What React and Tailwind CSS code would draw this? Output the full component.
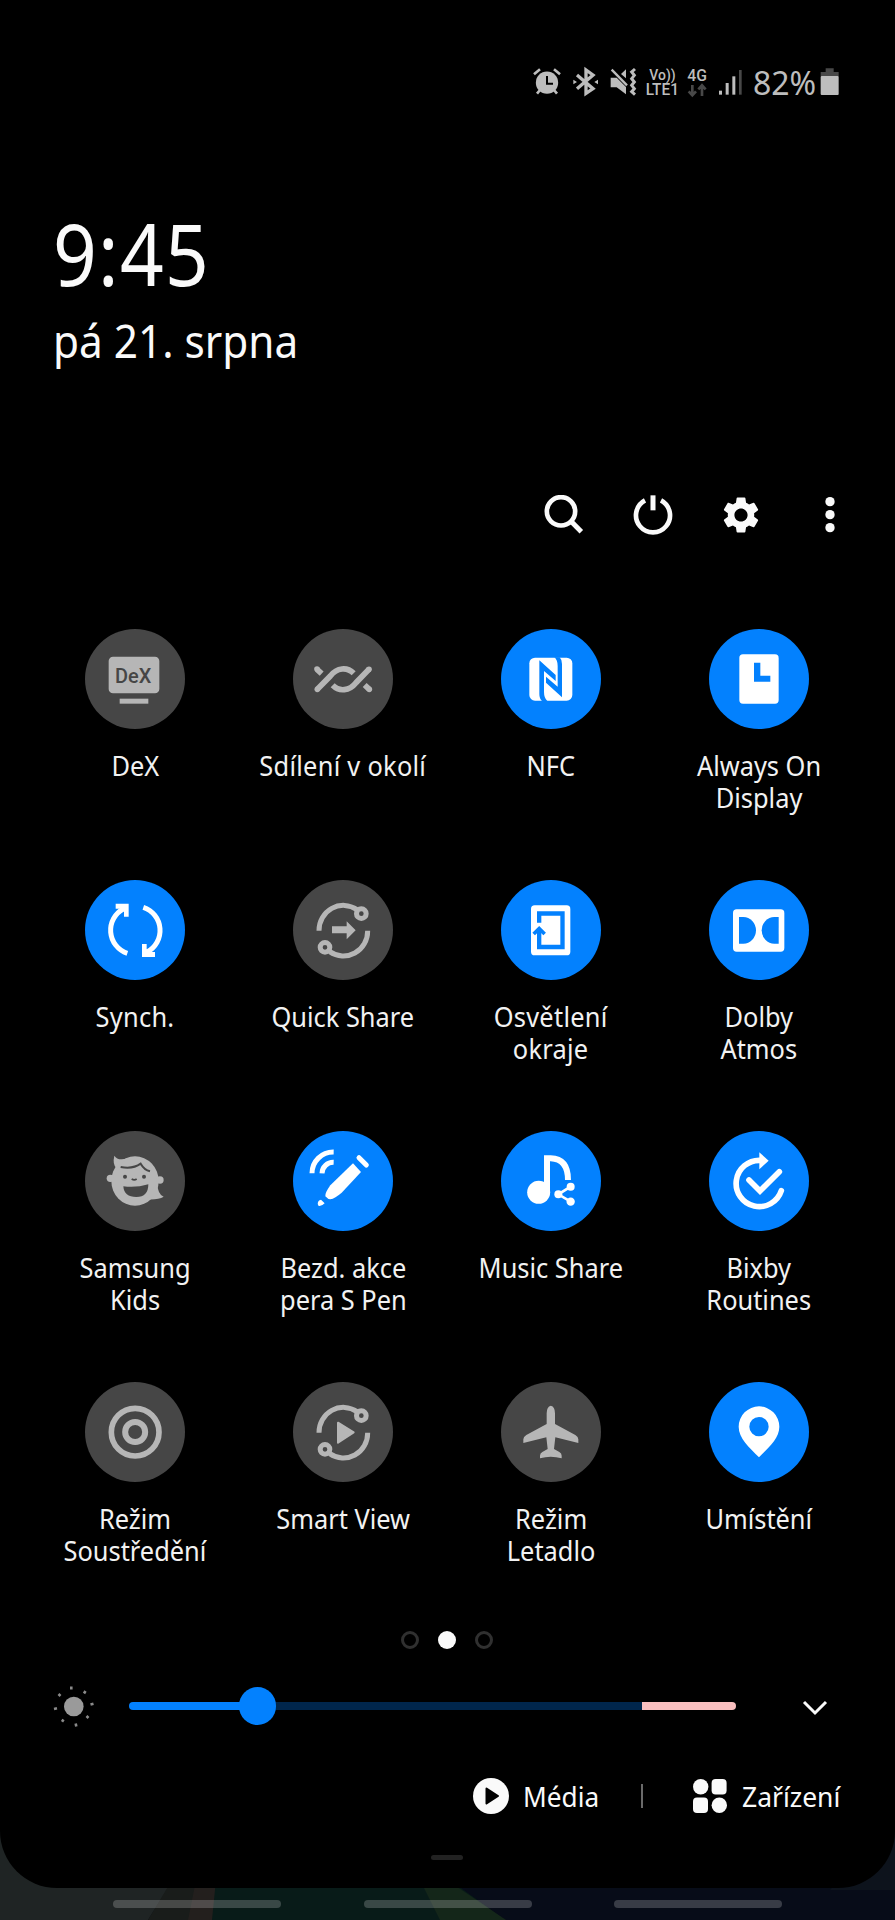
import clsx from "clsx";
import { MdSettings } from "react-icons/md";

const OFF = "#464646";
const ON = "#0381fe";

function DexIcon() {
  return (
    <svg viewBox="76 25 300 300" className="size-full" fill="currentColor">
      <rect x="147" y="108" width="152" height="110" rx="13" />
      <rect x="180" y="234" width="86" height="15" />
      <text
        x="166"
        y="186"
        fill={OFF}
        textLength="109"
        lengthAdjust="spacingAndGlyphs"
        className="font-['Roboto',sans-serif] text-[58px] font-medium"
      >
        DeX
      </text>
    </svg>
  );
}

function NearbyIcon() {
  return (
    <svg
      viewBox="700 25 300 300"
      className="size-full"
      fill="none"
      stroke="currentColor"
      strokeWidth="17"
    >
      <path d="M773 206 812 166C832 141 862 138 882 158M928 146 889 186C869 211 839 214 819 194" />
      <path d="M772 146 786 159M915 193 929 206" />
      <g fill="currentColor" stroke="none">
        <circle cx="772" cy="145" r="8.5" />
        <circle cx="773" cy="206" r="8.5" />
        <circle cx="928" cy="146" r="8.5" />
        <circle cx="929" cy="206" r="8.5" />
      </g>
    </svg>
  );
}

function NfcIcon() {
  return (
    <svg viewBox="65 25 300 300" className="size-full" fill="currentColor">
      <rect x="150" y="111" width="129" height="129" rx="17" />
      <g fill={ON}>
        <path d="M180 119 229 163V181L194 151V214Q194 232 204 241H188Q180 234 180 220Z" />
        <path d="M248 230 200 186V168L235 198V136Q235 118 225 110H241Q248 117 248 130Z" />
      </g>
    </svg>
  );
}

function AlwaysOnIcon() {
  return (
    <svg viewBox="689 25 300 300" className="size-full" fill="currentColor">
      <rect x="780" y="101" width="118" height="148" rx="11" />
      <path d="M824 126h19v39h30v18h-49z" fill={ON} />
    </svg>
  );
}

function SyncIcon() {
  return (
    <svg viewBox="76 28 300 300" className="size-full" fill="currentColor">
      <g fill="none" stroke="currentColor" strokeWidth="15">
        <path d="M203 248A73 73 0 0 1 192 114" />
        <path d="M251 110A73 73 0 0 1 262 244" />
      </g>
      <path d="M168 99H207V138H193V122L180 114H168Z" />
      <path d="M286 259H247V220H261V236L274 244H286Z" />
    </svg>
  );
}

// Broken ring with two nodes, shared by Quick Share and Smart View
function OrbitIcon({ children }) {
  return (
    <svg viewBox="700 28 300 300" className="size-full" fill="currentColor">
      <g fill="none" stroke="currentColor" strokeWidth="15">
        <path d="M778 180A73 75 0 0 1 892 117" />
        <path d="M924 180A73 75 0 0 1 810 243" />
        <circle cx="905" cy="129" r="14.5" />
        <circle cx="796" cy="230" r="14.5" />
      </g>
      {children}
    </svg>
  );
}

function QuickShareIcon() {
  return (
    <OrbitIcon>
      <path d="M817 167H861V152L888 179 861 206V188H817Z" />
    </OrbitIcon>
  );
}

function SmartViewIcon() {
  return (
    <OrbitIcon>
      <path
        d="M835 150 882 179 835 210Z"
        stroke="currentColor"
        strokeWidth="6"
        strokeLinejoin="round"
      />
    </OrbitIcon>
  );
}

function EdgeLightingIcon() {
  return (
    <svg viewBox="65 28 300 300" className="size-full" fill="currentColor">
      <rect x="155" y="104" width="118" height="150" rx="11" />
      <g fill="none" stroke={ON} strokeWidth="13">
        <path d="M179.500 156V128.500H249.500V229H179.500V178" />
        <path d="M163 190 179.500 174 196 190" strokeWidth="11" />
      </g>
    </svg>
  );
}

function DolbyIcon() {
  return (
    <svg viewBox="689 28 300 300" className="size-full" fill="currentColor">
      <rect x="761" y="116" width="154" height="127" rx="11" />
      <g fill={ON}>
        <path d="M779 139H792A38 40 0 0 1 792 219H779Z" />
        <path d="M898 139H885A38 40 0 0 0 885 219H898Z" />
      </g>
    </svg>
  );
}

function KidsIcon() {
  return (
    <svg viewBox="76 33 300 300" className="size-full" fill="currentColor">
      <ellipse cx="226" cy="183" rx="71" ry="74" />
      <circle cx="152" cy="175" r="11" />
      <circle cx="301" cy="180" r="11" />
      <path d="M164 107Q158 132 170 144L204 115Q174 124 164 107Z" />
      <path d="M292 186Q294 224 312 230Q296 240 262 238Z" />
      <path d="M183 141Q220 148 243 131Q254 150 271 154" fill="none" stroke={OFF} strokeWidth="6" />
      <path d="M216 177Q224 182 231 177" fill="none" stroke={OFF} strokeWidth="5" />
      <g fill={OFF}>
        <circle cx="196" cy="170" r="6" />
        <circle cx="253" cy="170" r="6" />
        <path d="M191 199Q229 204 266 193Q266 231 230 231Q193 231 191 199Z" />
      </g>
    </svg>
  );
}

function SPenIcon() {
  return (
    <svg viewBox="700 33 300 300" className="size-full" fill="currentColor">
      <g fill="none" stroke="currentColor" strokeWidth="15">
        <path d="M757 160A64 64 0 0 1 822 96" />
        <path d="M787 160A34 34 0 0 1 822 127" />
        <path d="M898 113 920 135" strokeLinecap="round" />
      </g>
      <path d="M880 130 904 156 846 218Q826 235 812 238Q805 238 797 229Q795 220 812 196Z" />
      <path d="M784 239 795 250Q785 260 777 258Q772 254 775 246Q777 240 784 239Z" />
    </svg>
  );
}

function MusicShareIcon() {
  return (
    <svg viewBox="65 33 300 300" className="size-full" fill="currentColor">
      <circle cx="178" cy="217" r="34.500" />
      <path
        d="M203 217V115H214C248 116 266 138 266 180"
        fill="none"
        stroke="currentColor"
        strokeWidth="18"
      />
      <path d="M274 200 237 223 274 245" fill="none" stroke="currentColor" strokeWidth="8" />
      <circle cx="237" cy="223" r="12" />
      <circle cx="274" cy="200" r="12" />
      <circle cx="274" cy="245" r="12.500" />
    </svg>
  );
}

function RoutinesIcon() {
  return (
    <svg viewBox="689 33 300 300" className="size-full" fill="currentColor">
      <g fill="none" stroke="currentColor" strokeWidth="17" strokeLinecap="round">
        <path d="M843 121A69.500 69.500 0 1 0 906 212" />
        <path d="M809 180 842 213 900 155" />
      </g>
      <path d="M840 97 868 122 840 148Z" />
    </svg>
  );
}

function FocusIcon() {
  return (
    <svg
      viewBox="76 36 300 300"
      className="size-full"
      fill="none"
      stroke="currentColor"
    >
      <circle cx="226.500" cy="186.500" r="71.500" strokeWidth="17" />
      <circle cx="226.500" cy="186" r="30" strokeWidth="18" />
    </svg>
  );
}

function AirplaneIcon() {
  return (
    <svg viewBox="65 36 300 300" className="size-full" fill="currentColor">
      <path d="M214.500 107Q227 110 227 130V162L288 195Q297 200 297 208V219L228 202L224 237L240 246Q247 250 247 257V265Q214 256 182 265V257Q182 250 189 246L205 237L201 202L132 219V208Q132 200 141 195L202 162V130Q202 110 214.500 107Z" />
    </svg>
  );
}

function LocationIcon() {
  return (
    <svg viewBox="689 36 300 300" className="size-full" fill="currentColor">
      <path
        fillRule="evenodd"
        d="M839 262C810 232 778 205 778 170A61 61 0 0 1 900 170C900 205 868 232 839 262ZM839 141A29 29 0 1 0 839 199A29 29 0 1 0 839 141Z"
      />
    </svg>
  );
}

const tiles = [
  { label: "DeX", icon: DexIcon },
  { label: "Sdílení v okolí", icon: NearbyIcon, wide: true },
  { label: "NFC", icon: NfcIcon, on: true },
  { label: "Always On\nDisplay", icon: AlwaysOnIcon, on: true },
  { label: "Synch.", icon: SyncIcon, on: true, wide: true },
  { label: "Quick Share", icon: QuickShareIcon },
  { label: "Osvětlení\nokraje", icon: EdgeLightingIcon, on: true, wide: true },
  { label: "Dolby\nAtmos", icon: DolbyIcon, on: true },
  { label: "Samsung\nKids", icon: KidsIcon },
  { label: "Bezd. akce\npera S Pen", icon: SPenIcon, on: true },
  { label: "Music Share", icon: MusicShareIcon, on: true },
  { label: "Bixby\nRoutines", icon: RoutinesIcon, on: true },
  { label: "Režim\nSoustředění", icon: FocusIcon },
  { label: "Smart View", icon: SmartViewIcon },
  { label: "Režim\nLetadlo", icon: AirplaneIcon },
  { label: "Umístění", icon: LocationIcon, on: true }
];

function Tile({ tile }) {
  const Icon = tile.icon;
  return (
    <div className="flex flex-col items-center">
      <div
        className={clsx(
          "size-[100px] rounded-full",
          tile.on ? "bg-[#0381fe] text-white" : "bg-[#464646] text-[#b6b6b6]"
        )}
      >
        <Icon />
      </div>
      <p
        className={clsx(
          "mt-[21px] scale-x-94 text-center text-[27px] leading-[32.4px] whitespace-pre text-[#f2f2f2]",
          tile.wide && "tracking-[0.3px]"
        )}
      >
        {tile.label}
      </p>
    </div>
  );
}

function StatusBar() {
  return (
    <div className="flex h-[96px] items-end justify-end pr-[55px] text-[#bdbdbd]">
      {/* alarm, bluetooth, vibrate, VoLTE, data, signal */}
      <svg
        viewBox="36 36 636 90"
        className="mb-[-1px] h-[30px] w-[212px] overflow-visible"
        fill="currentColor"
      >
        <circle cx="81" cy="83" r="33.500" />
        <g fill="none" stroke="currentColor" strokeWidth="8">
          <path d="M42 58 60 43M102 43 120 58" />
          <path d="M60 105 51 116M102 105 111 116" />
          <path d="M81 63V86H99" stroke="#000" strokeWidth="6" />
        </g>
        <g fill="none" stroke="currentColor" strokeWidth="10">
          <path d="M171 60 219 101 198 115V45L219 60 171 101" />
        </g>
        <path d="M160 74 171 81 160 88ZM234 74 223 81 234 88Z" />
        <path d="M272 68H290L318 96V118L290 97H272ZM303 57 318 43V70Z" />
        <path d="M275 44 321 91" fill="none" stroke="currentColor" strokeWidth="7" />
        <path
          d="M345 42 335 51 343 61 335 71 343 81 335 91 343 101 335 110 345 119"
          fill="none"
          stroke="currentColor"
          strokeWidth="9"
        />
        <g className="font-['Roboto',sans-serif] font-medium">
          <text x="388" y="75" fontSize="46" textLength="79" lengthAdjust="spacingAndGlyphs">Vo))</text>
          <text x="377" y="120" fontSize="47" textLength="100" lengthAdjust="spacingAndGlyphs">LTE1</text>
          <text x="502" y="79" fontSize="51" textLength="59" lengthAdjust="spacingAndGlyphs">4G</text>
        </g>
        <g fill="none" stroke="#484848" strokeWidth="8">
          <path d="M517 90V120M506 109 517 121 528 109" />
          <path d="M546 123V92M535 103 546 91 557 103" />
        </g>
        <rect x="597" y="107" width="9" height="12" />
        <rect x="617" y="84" width="9" height="35" />
        <rect x="637" y="64" width="9" height="55" />
        <rect x="657" y="45" width="8" height="74" fill="#484848" />
      </svg>
      <span className="ml-[9px] w-[67px] text-[32px] leading-[27px] tracking-[-0.1px] whitespace-nowrap">
        82%
      </span>
      <svg viewBox="901 39 60 84" className="h-[28px] w-[20px]" fill="#484848">
        <path d="M918 40H942V51H957V64H903V51H918Z" />
        <rect x="903" y="63" width="54" height="57" rx="3" fill="#bdbdbd" />
      </svg>
    </div>
  );
}

function Toolbar() {
  return (
    <div className="mt-[125px] flex h-10 items-center justify-end gap-[48.7px] pr-[45px]">
      <svg viewBox="72 44 120 120" className="size-10" fill="none" stroke="currentColor">
        <circle cx="123" cy="93" r="42.500" strokeWidth="14" />
        <path d="M153 123 184 154" strokeWidth="15" />
      </svg>
      <svg viewBox="338 44 120 120" className="size-10" fill="none" stroke="currentColor">
        <path d="M374 60A51 51 0 1 0 422 60" strokeWidth="14" />
        <path d="M398 45V90" strokeWidth="15" />
      </svg>
      <MdSettings className="-mx-0.5 size-11" />
      <svg viewBox="870 44 120 120" className="size-10" fill="currentColor">
        <circle cx="930" cy="64" r="14" />
        <circle cx="930" cy="103" r="14" />
        <circle cx="930" cy="142" r="14" />
      </svg>
    </div>
  );
}

function Brightness() {
  return (
    <div className="mt-[37px] flex h-10 items-center pl-[54px]">
      <svg viewBox="54 1687 40 40" className="size-10 overflow-visible" fill="#9a9a9a">
        <circle cx="73.800" cy="1707.500" r="9.800" />
        <g fill="none" stroke="#8a8a8a" strokeWidth="2.600">
          <path d="M71.300 1687.500V1690.500M84 1694.500 85.500 1692M90.500 1705.500 93.500 1704.700M86.500 1717 88.500 1719M75.700 1724.500 76.300 1727.500M62 1722.800 63.500 1720.500M54 1710 57 1709.300M58.500 1695 60.500 1697" />
        </g>
      </svg>
      <div className="relative ml-[34.5px] flex h-2 w-[607.5px] overflow-visible">
        <div className="w-[129px] rounded-l-full bg-[#0381fe]" />
        <div className="flex-1 bg-[#00264c]" />
        <div className="w-[94px] rounded-r-full bg-[#f9bfbf]" />
        <div className="absolute top-[-15px] left-[110px] size-[37.5px] rounded-full bg-[#0381fe]" />
      </div>
      <svg viewBox="0 0 28 18" className="mt-0.5 ml-[64.5px] h-[18px] w-7" fill="none" stroke="currentColor" strokeWidth="3">
        <path d="M3 4 14 15 25 4" />
      </svg>
    </div>
  );
}

function MediaDevices() {
  return (
    <div className="mt-[52px] flex h-9 items-center pl-[473px] text-[27px] leading-9 whitespace-nowrap">
      <svg viewBox="0 0 36 36" className="size-9">
        <circle cx="18" cy="18" r="18" fill="currentColor" />
        <path d="M13.500 10.500 25 18 13.500 25.500Z" fill="#000" stroke="#000" strokeWidth="2" strokeLinejoin="round" />
      </svg>
      <span className="mt-px ml-[14px] w-[118px] origin-left scale-x-97">Média</span>
      <div className="h-6 w-0.5 bg-[#6a6a6a]" />
      <svg viewBox="0 0 34 34" className="ml-[50px] size-[34px]" fill="currentColor">
        <circle cx="7.700" cy="7.700" r="7.700" />
        <rect x="18.600" width="15" height="15.400" rx="4" />
        <rect y="18.600" width="15" height="15.400" rx="4" />
        <circle cx="26.300" cy="26.300" r="7.700" />
      </svg>
      <span className="mt-px ml-[15px] origin-left scale-x-98">Zařízení</span>
    </div>
  );
}

// Dimmed home screen that shows under the panel
function Wallpaper() {
  return (
    <svg
      viewBox="0 0 895 100"
      preserveAspectRatio="none"
      className="absolute bottom-0 left-0 h-[100px] w-full"
    >
      <rect width="895" height="100" fill="#070c18" />
      <path d="M0 0H170V65L148 100H0Z" fill="#1f2424" />
      <path d="M172 60H216L212 100H148Z" fill="#191c1a" />
      <path d="M196 60H216V100H188Z" fill="#231f1d" />
      <path d="M216 60H450L505 100H212Z" fill="#081b18" />
      <path d="M420 60H447L506 100H440Z" fill="#142619" />
      <path d="M895 0V70H830Z" fill="#0d131c" />
    </svg>
  );
}

export default function App() {
  return (
    <div className="relative h-[1920px] w-[895px] overflow-hidden bg-[#070c18] font-['Noto_Sans',sans-serif] text-[#fafafa]">
      <Wallpaper />
      <div className="relative h-[1887.5px] rounded-b-[57px] bg-black">
        <StatusBar />
        <div className="mt-[107px] ml-[53px] origin-left scale-x-90 text-[85px] leading-[100px] tracking-[1.5px]">
          9:45
        </div>
        <div className="mt-[7px] ml-[53px] origin-left scale-x-92 text-[46px] leading-[60px]">
          pá 21. srpna
        </div>
        <Toolbar />

        <div className="mr-[32px] ml-[31px] mt-[93.8px] grid auto-rows-[200px] grid-cols-4 gap-y-[51.1px]">
          {tiles.map((tile) => (
            <Tile key={tile.label} tile={tile} />
          ))}
        </div>

        <div className="mt-[49.2px] flex justify-center gap-[18.6px] pr-px">
          <div className="size-[18px] rounded-full border-3 border-[#303030]" />
          <div className="size-[18px] rounded-full bg-[#fafafa]" />
          <div className="size-[18px] rounded-full border-3 border-[#303030]" />
        </div>
        <Brightness />
        <MediaDevices />
        <div className="mt-[41px] ml-[431px] h-[5px] w-8 rounded-full bg-[#222]" />
      </div>

      <div className="relative mt-[12.5px] flex gap-[82.5px] pl-[113px]">
        <div className="h-2 w-[168px] rounded-full bg-white/20" />
        <div className="h-2 w-[168px] rounded-full bg-white/20" />
        <div className="h-2 w-[168px] rounded-full bg-white/20" />
      </div>
    </div>
  );
}
